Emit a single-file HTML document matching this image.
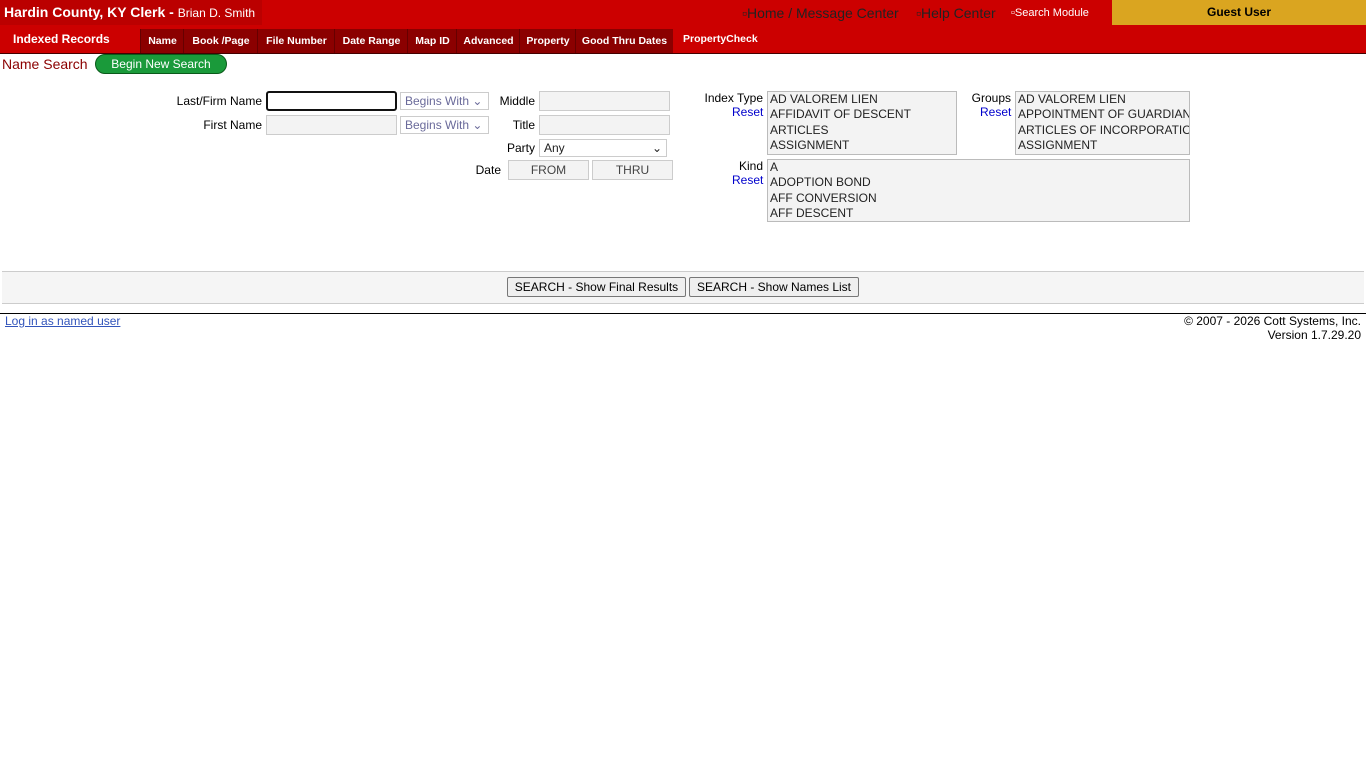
<!DOCTYPE html>
<html><head><meta charset="utf-8"><style>
body{margin:0;width:1366px;height:768px;background:#fff;font-family:"Liberation Sans",Arial,sans-serif;position:relative;overflow:hidden}
.a{position:absolute;white-space:nowrap}
.tab{position:absolute;top:29px;height:24px;background:#8b0000;color:#fff;font-size:10.5px;font-weight:bold;line-height:24px;text-align:center;border-left:1px solid #600}
.inp{position:absolute;height:18px;background:#f3f3f3;border:1px solid #ccc;box-sizing:border-box}
.sel{position:absolute;height:18px;background:#fff;border:1px solid #ccc;box-sizing:border-box;font-size:12px;color:#6a6a9a;line-height:16px;padding-left:4px}
.lb{position:absolute;font-size:12px;text-align:right}
.list{position:absolute;background:#f3f3f3;border:1px solid #bbb;box-sizing:border-box;font-size:12px;line-height:15.4px;padding:0 2px;color:#222;overflow:hidden;white-space:nowrap}
.rs{position:absolute;font-size:12px;color:#0000cc}
.btn{position:absolute;top:277px;height:20px;background:#efefef;border:1px solid #777;border-radius:2px;box-sizing:border-box;font-size:12px;line-height:18px;text-align:center}
</style></head><body>
<div class="a" style="left:0;top:0;width:1366px;height:53px;background:#cc0000;border-bottom:1px solid #400"></div>
<div class="a" style="left:0;top:0;width:262px;height:25px;background:#bb0000"></div>
<div class="a" style="left:4px;top:4px;color:#fff;font-size:14px;font-weight:bold">Hardin County, KY Clerk - <span style="font-weight:normal;font-size:12px">Brian D. Smith</span></div>
<div class="a" style="left:742px;top:5px;color:#222;font-size:14px">▫Home / Message Center</div>
<div class="a" style="left:916px;top:5px;color:#222;font-size:14px">▫Help Center</div>
<div class="a" style="left:1011px;top:7px;color:#fff;font-size:11px">▫Search Module</div>
<div class="a" style="left:1112px;top:0;width:254px;height:25px;background:#daa520;text-align:center;font-size:12px;font-weight:bold;line-height:24px">Guest User</div>
<div class="a" style="left:13px;top:32px;color:#fff;font-size:12px;font-weight:bold">Indexed Records</div>
<div class="tab" style="left:140px;width:43px">Name</div>
<div class="tab" style="left:183px;width:74px">Book /Page</div>
<div class="tab" style="left:257px;width:77px">File Number</div>
<div class="tab" style="left:334px;width:73px">Date Range</div>
<div class="tab" style="left:407px;width:49px">Map ID</div>
<div class="tab" style="left:456px;width:63px">Advanced</div>
<div class="tab" style="left:519px;width:56px">Property</div>
<div class="tab" style="left:575px;width:97px">Good Thru Dates</div>
<div class="a" style="left:683px;top:33px;color:#fff;font-size:10.5px;font-weight:bold">PropertyCheck</div>
<div class="a" style="left:2px;top:56px;color:#8b0000;font-size:14px">Name Search</div>
<div class="a" style="left:95px;top:54px;width:132px;height:20px;background:#1a9a3a;border:1px solid #0a5a1a;box-sizing:border-box;border-radius:10px;color:#fff;font-size:12px;text-align:center;line-height:18px">Begin New Search</div>

<div class="lb" style="left:170px;width:92px;top:94px">Last/Firm Name</div>
<div class="inp" style="left:266px;top:91px;width:131px;height:20px;border:2px solid #111;border-radius:3px;background:#fff"></div>
<div class="sel" style="left:400px;top:92px;width:89px">Begins With ⌄</div>
<div class="lb" style="left:490px;width:45px;top:94px">Middle</div>
<div class="inp" style="left:539px;top:91px;width:131px;height:20px"></div>
<div class="lb" style="left:170px;width:92px;top:118px">First Name</div>
<div class="inp" style="left:266px;top:115px;width:131px;height:20px"></div>
<div class="sel" style="left:400px;top:116px;width:89px">Begins With ⌄</div>
<div class="lb" style="left:490px;width:45px;top:118px">Title</div>
<div class="inp" style="left:539px;top:115px;width:131px;height:20px"></div>
<div class="lb" style="left:490px;width:45px;top:141px">Party</div>
<div class="sel" style="left:539px;top:139px;width:128px;color:#222">Any<span style="position:absolute;right:4px">⌄</span></div>
<div class="lb" style="left:460px;width:41px;top:163px">Date</div>
<div class="inp" style="left:508px;top:160px;width:81px;height:20px;font-size:12px;text-align:center;line-height:18px;color:#444">FROM</div>
<div class="inp" style="left:592px;top:160px;width:81px;height:20px;font-size:12px;text-align:center;line-height:18px;color:#444">THRU</div>

<div class="lb" style="left:690px;width:73px;top:91px">Index Type</div>
<div class="rs" style="left:732px;top:105px">Reset</div>
<div class="list" style="left:767px;top:91px;width:190px;height:64px">AD VALOREM LIEN<br>AFFIDAVIT OF DESCENT<br>ARTICLES<br>ASSIGNMENT</div>
<div class="lb" style="left:960px;width:51px;top:91px">Groups</div>
<div class="rs" style="left:980px;top:105px">Reset</div>
<div class="list" style="left:1015px;top:91px;width:175px;height:64px">AD VALOREM LIEN<br>APPOINTMENT OF GUARDIAN<br>ARTICLES OF INCORPORATION<br>ASSIGNMENT</div>
<div class="lb" style="left:700px;width:63px;top:159px">Kind</div>
<div class="rs" style="left:732px;top:173px">Reset</div>
<div class="list" style="left:767px;top:159px;width:423px;height:63px">A<br>ADOPTION BOND<br>AFF CONVERSION<br>AFF DESCENT</div>

<div class="a" style="left:2px;top:271px;width:1362px;height:31px;background:#f5f5f5;border-top:1px solid #ccc;border-bottom:1px solid #ccc"></div>
<div class="btn" style="left:507px;width:179px">SEARCH - Show Final Results</div>
<div class="btn" style="left:689px;width:170px">SEARCH - Show Names List</div>
<div class="a" style="left:0;top:313px;width:1366px;height:1px;background:#000"></div>
<div class="a" style="left:5px;top:314px;font-size:12px;color:#3355bb;text-decoration:underline">Log in as named user</div>
<div class="a" style="right:5px;top:314px;font-size:12px;text-align:right;line-height:14px">© 2007 - 2026 Cott Systems, Inc.<br>Version 1.7.29.20</div>
</body></html>
